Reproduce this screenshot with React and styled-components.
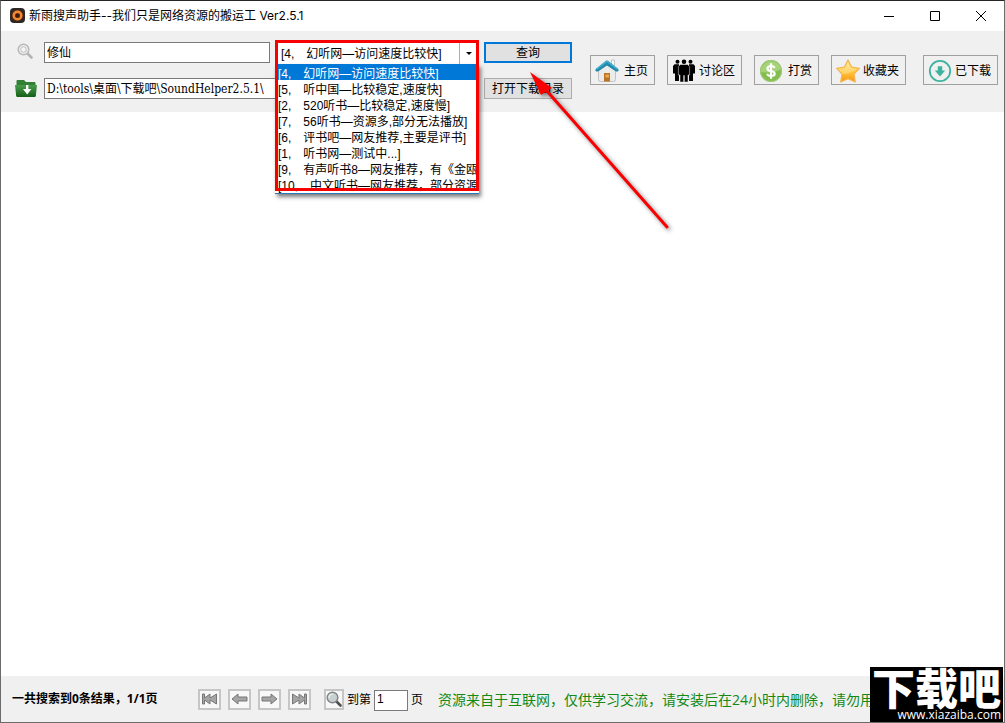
import React, { useState } from "react";
import styled, { createGlobalStyle } from "styled-components";

const GlobalStyle = createGlobalStyle`
  *, *::before, *::after { box-sizing: border-box; }
  body { margin: 0; background: #fff; }
  button, input, select { font: inherit; color: inherit; margin: 0; border-radius: 0; }
  svg { display: block; flex: none; }
`;

const titleFont = `Inter, "Noto Sans CJK SC", sans-serif`;
const noticeFont = `"Open Sans", "Noto Sans CJK SC", sans-serif`;
const formFont = `"Liberation Sans", "Noto Sans CJK SC", sans-serif`;
const pathFont = `"DejaVu Serif Condensed", "DejaVu Serif", "Noto Sans CJK SC", serif`;

const Window = styled.div`
  position: relative;
  display: flex;
  flex-direction: column;
  min-height: 100vh;
  overflow: hidden;
  background: #fff;
  border: 1px solid #6b6b6b;
  border-top-color: #252525;
  color: #000;
  font: 12px/16px ${formFont};
`;

const TitleBar = styled.header`
  display: flex;
  align-items: center;
  height: 30px;
  padding-left: 8px;
  font-family: ${titleFont};
`;

const Title = styled.h1`
  flex: 1;
  margin: 0 0 0 4px;
  font-size: 12px;
  font-weight: 400;
  white-space: nowrap;
`;

const WindowButton = styled.button`
  display: flex;
  align-items: center;
  justify-content: center;
  width: 46px;
  height: 30px;
  padding: 0;
  border: 0;
  background: none;
`;

const Toolbar = styled.div`
  display: flex;
  justify-content: space-between;
  align-items: flex-start;
  height: 81px;
  padding: 11px 6px 0 14px;
  background: #f0f0f0;
`;

const SearchForm = styled.form`
  display: grid;
  grid-template-columns: 24px 226px 204px 88px;
  grid-template-rows: 21px 21px;
  gap: 15px 5px;
`;

const IconLabel = styled.label`
  display: flex;
  align-items: ${(p) => (p.$top ? "flex-start" : "center")};
  padding: ${(p) => (p.$top ? "1px 0 0 2px" : "0")};
`;

const TextInput = styled.input`
  min-width: 0;
  width: ${(p) => p.$width || "100%"};
  height: 21px;
  padding: 0 2px 2px;
  border: 1px solid #7a7a7a;
  background: #fff;
  grid-column: ${(p) => p.$column || "auto"};
`;

const PathInput = styled(TextInput)`
  font-family: ${pathFont};
`;

const SourcePicker = styled.div`
  position: relative;
  z-index: 1;
  padding: 0 3px;
  background: #fff;
`;

const SourceSelect = styled.select`
  appearance: none;
  display: block;
  width: 100%;
  height: 22px;
  padding: 2px 20px 0 3px;
  border: 0;
  background: #fff;
  outline: none;
`;

const SelectArrow = styled.span`
  position: absolute;
  top: 0;
  right: 2px;
  display: flex;
  align-items: center;
  justify-content: center;
  width: 18px;
  height: 22px;
  border-left: 1px solid #adadad;
  pointer-events: none;
`;

const SourceList = styled.ul`
  position: absolute;
  top: 22px;
  left: 0;
  right: 0;
  height: 130px;
  margin: 0;
  padding: 0 3px;
  overflow: hidden;
  list-style: none;
  background: #fff;
  border-bottom: 1px solid #2779b8;
  box-shadow: 2px 3px 4px rgba(0, 0, 0, 0.5);
`;

const SourceItem = styled.li`
  height: 16px;
  line-height: 20px;
  white-space: nowrap;
  color: ${(p) => (p.$selected ? "#fff" : "#000")};
  background: ${(p) => (p.$selected ? "linear-gradient(#0078d7, #0078d7) 0 0 / 100% 17px" : "none")};
`;

const Highlight = styled.div`
  position: absolute;
  top: -2px;
  left: 0;
  right: 0;
  height: 151px;
  border: 3px solid #f60000;
  pointer-events: none;
`;

const QueryCell = styled.div`
  position: relative;
  z-index: 2;
`;

const Pointer = styled.svg`
  position: absolute;
  top: 22px;
  left: 38px;
  overflow: visible;
  filter: drop-shadow(2px 2px 2px rgba(0, 0, 0, 0.5));
  pointer-events: none;
`;

const PushButton = styled.button`
  display: block;
  width: 100%;
  height: 21px;
  padding: 0;
  line-height: 16px;
  white-space: nowrap;
  background: #e1e1e1;
  border: ${(p) => (p.$primary ? "2px solid #0078d7" : "1px solid #adadad")};
  grid-column: ${(p) => p.$column || "auto"};
`;

const Shortcuts = styled.nav`
  display: flex;
  gap: 12px;
  padding-top: 13px;

  & > :last-child {
    margin-left: 5px;
  }
`;

const ShortcutButton = styled.button`
  display: flex;
  align-items: center;
  justify-content: space-between;
  width: ${(p) => (p.$wide ? "75px" : "65px")};
  height: 30px;
  padding: 1px 6px 0 4px;
  border: 1px solid #a0a0a0;
  background: #f0f0f0;
  white-space: nowrap;
`;

const Results = styled.main`
  flex: 1;
  background: #fff;
`;

const StatusBar = styled.footer`
  display: flex;
  align-items: center;
  height: 46px;
  padding-left: 11px;
  background: #f0f0f0;
  white-space: nowrap;
`;

const Summary = styled.strong`
  width: 186px;
  font-family: ${noticeFont};
  font-weight: 700;
`;

const Pager = styled.div`
  display: flex;
  gap: 7px;
  margin-right: 13px;
`;

const PagerButton = styled.button`
  display: flex;
  align-items: center;
  justify-content: center;
  width: ${(p) => p.$width || "23px"};
  height: 21px;
  padding: 0;
  border: 2px solid #c6c6c6;
  background: #f8f8f8;
`;

const PageJump = styled.form`
  display: flex;
  align-items: center;
  gap: 3px;
  padding: 2px 0 0 3px;
`;

const Notice = styled.p`
  flex: 1;
  min-width: 0;
  margin: 0 0 0 15px;
  padding-top: 2px;
  overflow: hidden;
  color: #148914;
  font: 14px/20px ${noticeFont};
`;

const Brand = styled.div`
  position: absolute;
  right: 1px;
  bottom: -1px;
  width: 133px;
  height: 56px;
  overflow: hidden;
  background: #000;
  color: #fff;
  text-align: right;
`;

const BrandName = styled.div`
  font: 900 43px/38px "Noto Sans CJK SC", sans-serif;
  text-align: center;
  white-space: nowrap;
`;

const BrandUrl = styled.div`
  padding: 2px 2px 0 0;
  font: 12px/16px "Open Sans", sans-serif;
`;

const AppIcon = () => (
  <svg width="16" height="16" viewBox="0 0 16 16">
    <rect x="1" y="0" width="15" height="15" rx="4" fill="#2d2725" />
    <circle cx="8.5" cy="7.5" r="5.5" fill="#6b2f12" />
    <circle cx="8.5" cy="7.5" r="3.8" fill="none" stroke="#f28a32" strokeWidth="2.4" />
    <circle cx="8.5" cy="7.5" r="1.8" fill="#3a1a10" />
  </svg>
);

const GlassIcon = ({ size = 16, dark }) => (
  <svg width={size} height={size} viewBox="0 0 16 16">
    <path d="M10.5 10.5 14.5 14.5" stroke={dark ? "#505050" : "#b4b4b4"} strokeWidth="2.6" strokeLinecap="round" />
    <circle cx="6.5" cy="6.5" r="5.3" fill={dark ? "#c9d0d2" : "#eee"} stroke={dark ? "#858585" : "#b8b8b8"} strokeWidth="1.5" />
    {!dark && <circle cx="6.5" cy="6.5" r="2.8" fill="#f5f5f5" stroke="#bdbdbd" strokeWidth="1" />}
    {dark && <path d="M3 7Q3 3 7 3" fill="none" stroke="#eef2f3" strokeWidth="1.2" />}
  </svg>
);

const FolderIcon = () => (
  <svg width="22" height="19" viewBox="0 0 22 19">
    <defs>
      <linearGradient id="folder" x2="0" y2="1">
        <stop stopColor="#4a9c4b" />
        <stop offset="1" stopColor="#136018" />
      </linearGradient>
    </defs>
    <path d="M1.5 17V2Q1.5 1 2.5 1H9L11 3H19.5Q20.5 3 20.5 4V17Z" fill="#347f36" />
    <path d="M0 6H22L20.8 17Q20.7 18 19.7 18H2.3Q1.3 18 1.2 17Z" fill="url(#folder)" />
    <path d="M11 6V10H8L12.2 15.5 16.4 10H13.4V6Z" fill="#fff" />
  </svg>
);

const HomeIcon = () => (
  <svg width="24" height="24" viewBox="0 0 24 24">
    <path d="M16.5 1h3V9h-3Z" fill="#f7f7f7" stroke="#c5c5c5" />
    <path d="M3.5 11 12 5l8.5 6v9.5q0 2-2 2h-13q-2 0-2-2Z" fill="#ebebeb" stroke="#c2c2c2" />
    <path d="M9 14h6V22.5H9Z" fill="#b87527" />
    <path d="M10.5 15.5h3.5V18.5h-3.5Z" fill="#e9ad4e" />
    <path d="M.2 11.2 1 9.8 11 1.8Q12 1.1 13 1.8L23 9.8 23.8 11.2 22.8 12.6H21L12 6.4 3 12.6H1.2Z" fill="#2289ad" />
    <path d="M1.5 10.2 12 2.3 22.5 10.2" fill="none" stroke="#45b5d3" strokeWidth="1.2" />
  </svg>
);

const PeopleIcon = () => (
  <svg width="24" height="24" viewBox="0 0 24 24">
    <circle cx="5.5" cy="2.8" r="2" />
    <circle cx="18.5" cy="2.8" r="2" />
    <path d="M2.5 5.3H7V22H3V14.5H1V7Z" />
    <path d="M21.5 5.3H17V22H21V14.5H23V7Z" />
    <path d="M8.5 5.5H15.5L17.6 7.5V16H16V23H12.3V16.5H11.7V23H8V16H6.4V7.5Z" stroke="#f0f0f0" strokeWidth=".5" />
    <circle cx="12" cy="2.8" r="2.3" />
  </svg>
);

const MoneyIcon = () => (
  <svg width="24" height="24" viewBox="0 0 24 24">
    <circle cx="12" cy="12" r="11" fill="#83bd4d" />
    <path d="M1.5 13A10.7 10.7 0 0 1 22.5 10Q14 15 1.5 13Z" fill="#a7d27c" />
    <circle cx="12" cy="12" r="10.5" fill="none" stroke="#a3cc7b" />
    <path d="M15.8 8.8Q14.5 7 12 7 8.5 7 8.5 9.4 8.5 11.4 12 12 15.7 12.7 15.7 14.8 15.7 17 12 17 9.3 17 8 15M12 4.2V19.8" fill="none" stroke="#fff" strokeWidth="2.2" />
  </svg>
);

const StarIcon = () => (
  <svg width="24" height="24" viewBox="0 0 24 24">
    <defs>
      <linearGradient id="star" x2="0" y2="1">
        <stop stopColor="#ffe58a" />
        <stop offset=".55" stopColor="#ffc63b" />
        <stop offset="1" stopColor="#fa9114" />
      </linearGradient>
    </defs>
    <path d="M12 1 15.6 8 23.4 9.4 18 15 19.3 23 12 19.8 4.7 23 6 15 .6 9.4 8.4 8Z" fill="url(#star)" stroke="#f4b64c" strokeWidth="1.2" strokeLinejoin="round" />
    <path d="M2 10 9 9 12 3 15 9 21 10Q13 15 7 15Z" fill="#fff" opacity=".25" />
  </svg>
);

const DownloadedIcon = () => (
  <svg width="24" height="24" viewBox="0 0 24 24">
    <circle cx="12" cy="12" r="10.2" fill="none" stroke="#3cb39e" strokeWidth="1.8" />
    <path d="M9.8 7.2h4.4v4.3h3L12 17.5 6.8 11.5h3Z" fill="#3cb39e" />
  </svg>
);

const arrowPaths = {
  first: "M1.5 3h2v4L9 3v4l6.5-4v10L9 9v4L3.5 9v4h-2Z",
  last: "M15.5 3h-2v4L8 3v4L1.5 3v10L8 9v4l5.5-4v4h2Z",
  prev: "M1 8 7 3v3h9v4H7v3Z",
  next: "M16 8 10 3v3H1v4h9v3Z",
};

const PagerIcon = ({ kind }) => (
  <svg width="17" height="16" viewBox="0 0 17 16">
    <path d={arrowPaths[kind]} fill="#a5a5a5" stroke="#777" strokeWidth="1" strokeLinejoin="round" />
  </svg>
);

const sources = [
  "[4,\u2003幻听网—访问速度比较快]",
  "[5,\u2003听中国—比较稳定,速度快]",
  "[2,\u2003520听书—比较稳定,速度慢]",
  "[7,\u200356听书—资源多,部分无法播放]",
  "[6,\u2003评书吧—网友推荐,主要是评书]",
  "[1,\u2003听书网—测试中...]",
  "[9,\u2003有声听书8—网友推荐，有《金瓯",
  "[10,\u2003中文听书—网友推荐，部分资源",
];

const shortcuts = [
  ["主页", HomeIcon],
  ["讨论区", PeopleIcon],
  ["打赏", MoneyIcon],
  ["收藏夹", StarIcon],
  ["已下载", DownloadedIcon],
];

const pages = [
  ["first", "首页"],
  ["prev", "上一页"],
  ["next", "下一页"],
  ["last", "末页"],
];

const stop = (e) => e.preventDefault();

export default function App() {
  const [source, setSource] = useState(0);
  return (
    <Window>
      <GlobalStyle />
      <TitleBar>
        <AppIcon />
        <Title>新雨搜声助手--我们只是网络资源的搬运工 Ver2.5.1</Title>
        <WindowButton aria-label="最小化">
          <svg width="10" height="10" stroke="#000"><path d="M0 5.5H10" /></svg>
        </WindowButton>
        <WindowButton aria-label="最大化">
          <svg width="10" height="10" stroke="#000" fill="none"><path d="M.5.5h9v9h-9Z" /></svg>
        </WindowButton>
        <WindowButton aria-label="关闭">
          <svg width="10" height="10" stroke="#000"><path d="M0 0 10 10M10 0 0 10" /></svg>
        </WindowButton>
      </TitleBar>

      <Toolbar>
        <SearchForm onSubmit={stop}>
          <IconLabel htmlFor="keyword" aria-label="关键字" $top><GlassIcon /></IconLabel>
          <TextInput id="keyword" defaultValue="修仙" />
          <SourcePicker>
            <SourceSelect aria-label="来源" value={source} onChange={(e) => setSource(Number(e.target.value))}>
              {sources.map((name, i) => <option key={name} value={i}>{name}</option>)}
            </SourceSelect>
            <SelectArrow>
              <svg width="6" height="3"><path d="M0 0H6L3 3Z" /></svg>
            </SelectArrow>
            <SourceList role="listbox" aria-label="来源列表">
              {sources.map((name, i) => (
                <SourceItem key={name} role="option" aria-selected={i === source} $selected={i === source} onClick={() => setSource(i)}>
                  {name}
                </SourceItem>
              ))}
            </SourceList>
            <Highlight />
          </SourcePicker>
          <QueryCell>
            <PushButton type="submit" $primary>查询</PushButton>
            <Pointer width="150" height="170" viewBox="522 64 150 170" aria-hidden="true">
              <path d="M546 90 667 227" stroke="#fb0000" strokeWidth="3" strokeLinecap="round" />
              <path d="M530 72 552 88 547 91 541 95Z" fill="#fb0000" />
            </Pointer>
          </QueryCell>
          <IconLabel htmlFor="folder-path" aria-label="下载目录"><FolderIcon /></IconLabel>
          <PathInput id="folder-path" $column="2 / 4" defaultValue={"D:\\tools\\桌面\\下载吧\\SoundHelper2.5.1\\"} />
          <PushButton type="button" $column="4">打开下载目录</PushButton>
        </SearchForm>
        <Shortcuts>
          {shortcuts.map(([label, Icon]) => (
            <ShortcutButton key={label} type="button" $wide={label.length > 2}><Icon />{label}</ShortcutButton>
          ))}
        </Shortcuts>
      </Toolbar>

      <Results />

      <StatusBar>
        <Summary>一共搜索到0条结果，1/1页</Summary>
        <Pager>
          {pages.map(([kind, label]) => (
            <PagerButton key={kind} type="button" aria-label={label}><PagerIcon kind={kind} /></PagerButton>
          ))}
        </Pager>
        <PagerButton form="page-jump" $width="20px" aria-label="跳转"><GlassIcon size={16} dark /></PagerButton>
        <PageJump id="page-jump" onSubmit={stop}>
          <label htmlFor="page">到第</label>
          <TextInput id="page" $width="34px" defaultValue="1" />
          <span>页</span>
        </PageJump>
        <Notice>资源来自于互联网，仅供学习交流，请安装后在24小时内删除，请勿用</Notice>
      </StatusBar>

      <Brand>
        <BrandName>下载吧</BrandName>
        <BrandUrl>www.xiazaiba.com</BrandUrl>
      </Brand>
    </Window>
  );
}
